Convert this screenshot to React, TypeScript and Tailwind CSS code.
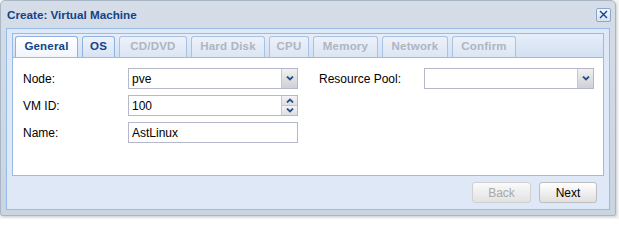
import React from "react";

const font = { fontFamily: '"Liberation Sans", Arial, sans-serif' };

const tabs = [
  { label: "General", w: "w-[63px]", state: "active" },
  { label: "OS", w: "w-[33px]", state: "enabled" },
  { label: "CD/DVD", w: "w-[68px]", state: "disabled" },
  { label: "Hard Disk", w: "w-[74px]", state: "disabled" },
  { label: "CPU", w: "w-[40px]", state: "disabled" },
  { label: "Memory", w: "w-[65px]", state: "disabled" },
  { label: "Network", w: "w-[66px]", state: "disabled" },
  { label: "Confirm", w: "w-[64px]", state: "disabled" },
];

function Chevron({ up = false }: { up?: boolean }) {
  return (
    <svg width="8" height="5" viewBox="0 0 8 5" className="block">
      <path
        d={up ? "M1 4.5 L4 1.5 L7 4.5" : "M1 0.5 L4 3.5 L7 0.5"}
        fill="none"
        stroke="#2c4f8c"
        strokeWidth="1.8"
      />
    </svg>
  );
}

function Combo({ value, className = "" }: { value?: string; className?: string }) {
  return (
    <div className={`flex h-[21px] w-[170px] border border-[#b5b8c8] bg-white ${className}`}>
      <div className="flex flex-1 items-center px-[3px] text-[12px] text-black">{value}</div>
      <div className="flex w-[16px] items-center justify-center border-l border-[#c5c8d2] bg-gradient-to-b from-[#f0f0f0] to-[#cfd1d6]">
        <Chevron />
      </div>
    </div>
  );
}

function Spinner({ value }: { value: string }) {
  return (
    <div className="flex h-[21px] w-[170px] border border-[#b5b8c8] bg-white">
      <div className="flex flex-1 items-center px-[3px] text-[12px] text-black">{value}</div>
      <div className="flex w-[16px] flex-col border-l border-[#c5c8d2]">
        <div className="flex flex-1 items-center justify-center bg-gradient-to-b from-[#f4f4f4] to-[#dcdee2]">
          <Chevron up />
        </div>
        <div className="flex flex-1 items-center justify-center border-t border-[#c5c8d2] bg-gradient-to-b from-[#f4f4f4] to-[#dcdee2]">
          <Chevron />
        </div>
      </div>
    </div>
  );
}

function TextField({ value }: { value: string }) {
  return (
    <div className="flex h-[21px] w-[170px] items-center border border-[#b5b8c8] bg-white px-[3px] text-[12px] text-black">
      {value}
    </div>
  );
}

function Row({ label, children }: { label: string; children: React.ReactNode }) {
  return (
    <div className="flex items-center">
      <div className="w-[105px] text-[12px] text-black">{label}</div>
      {children}
    </div>
  );
}

export default function App() {
  return (
    <div className="h-[219px] w-[619px] bg-[#f4f4f4]" style={font}>
      <div className="flex h-[216px] w-[616px] flex-col rounded-t-[5px] rounded-b-[2px] border border-[#a8b6c6] bg-gradient-to-b from-[#d4dde8] to-[#cad5e2] shadow-[1px_1px_2px_rgba(0,0,0,0.15)]">
        {/* header */}
        <div className="flex h-[27px] items-center justify-between pl-[6px] pr-[4px]">
          <span className="text-[11.7px] font-bold text-[#15428b]">Create: Virtual Machine</span>
          <div className="flex h-[14px] w-[15px] items-center justify-center rounded-[2px] border border-[#8aa6cc] bg-gradient-to-b from-[#f3f7fc] to-[#d7e2f0]">
            <svg width="9" height="9" viewBox="0 0 9 9">
              <path d="M1 1 L8 8 M8 1 L1 8" stroke="#15428b" strokeWidth="1.4" />
            </svg>
          </div>
        </div>

        {/* frame body */}
        <div className="mx-[5px] mb-[5px] flex flex-1 flex-col border border-[#99bbe8] bg-[#dfe8f6] px-[5px] pt-[4px]">
          {/* tab panel */}
          <div className="flex flex-col">
            <div className="flex h-[25px] flex-col border border-[#99bbe8] bg-gradient-to-b from-[#e6eef9] to-[#d3e0f2]">
              <div className="flex flex-1 items-end gap-[4px] pl-[2px]">
                {tabs.map((t) => (
                  <div
                    key={t.label}
                    className={`flex h-[21px] ${t.w} items-center justify-center rounded-t-[3px] border border-b-0 text-[11.5px] font-bold tracking-[0.2px] ${
                      t.state === "active"
                        ? "border-[#8db2e3] bg-gradient-to-b from-[#ffffff] to-[#f1f5fb] text-[#15428b]"
                        : t.state === "enabled"
                        ? "border-[#8db2e3] bg-gradient-to-b from-[#eef3fa] to-[#d7e3f3] text-[#15428b]"
                        : "border-[#a9c2e3] bg-gradient-to-b from-[#edf2f9] to-[#dbe5f3] text-[#aeb5c1]"
                    }`}
                  >
                    {t.label}
                  </div>
                ))}
              </div>
            </div>
            {/* tab body */}
            <div className="flex h-[118px] gap-[21px] border border-t-0 border-[#99bbe8] bg-white pl-[10px] pt-[10px]">
              <div className="flex flex-col gap-[6px]">
                <Row label="Node:">
                  <Combo value="pve" />
                </Row>
                <Row label="VM ID:">
                  <Spinner value="100" />
                </Row>
                <Row label="Name:">
                  <TextField value="AstLinux" />
                </Row>
              </div>
              <div className="flex flex-col">
                <Row label="Resource Pool:">
                  <Combo />
                </Row>
              </div>
            </div>
          </div>

          {/* footer */}
          <div className="flex flex-1 items-center justify-end gap-[8px] pr-[7px]">
            <button className="h-[21px] w-[59px] rounded-[3px] border border-[#d0d0d0] bg-gradient-to-b from-[#fafafa] to-[#e2e2e2] text-[12px] text-[#a8a8a8]">
              Back
            </button>
            <button className="h-[21px] w-[58px] rounded-[3px] border border-[#bdbdbd] bg-gradient-to-b from-[#ffffff] to-[#e0e0e0] text-[12px] text-black">
              Next
            </button>
          </div>
        </div>
      </div>
    </div>
  );
}
